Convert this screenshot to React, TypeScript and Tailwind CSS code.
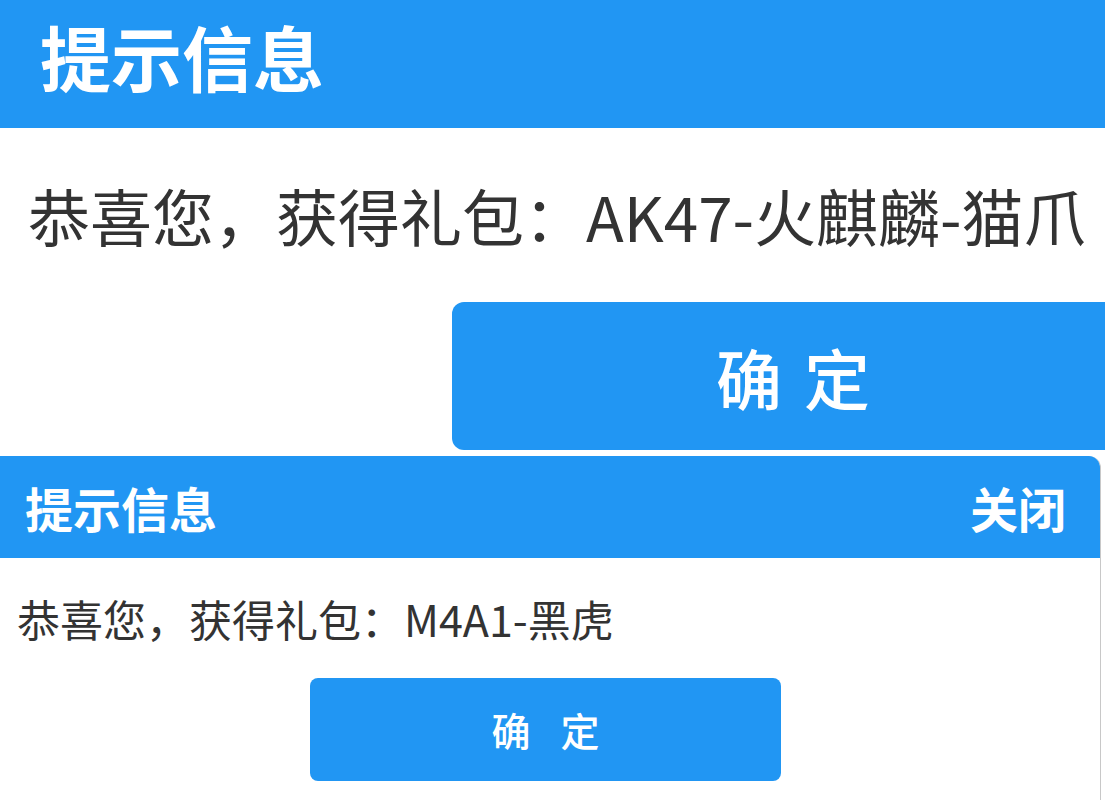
import React from 'react';

const font = { fontFamily: '"Noto Sans CJK SC", "Noto Sans", sans-serif' };

export default function App() {
    return (
        <div className="w-[1105px] h-[800px] bg-white overflow-hidden" style={font}>
            {/* Large dialog (cropped) */}
            <div className="w-full overflow-hidden">
                <div className="h-[128px] bg-[#2196f3] pl-[40px] pt-[20px]">
                    <span className="text-[71px] leading-none font-bold text-white">提示信息</span>
                </div>
                <div className="h-[174px] flex items-center pl-[28px]">
                    <p className="text-[62px] leading-none text-[#333] whitespace-nowrap">恭喜您，获得礼包：AK47-火麒麟-猫爪</p>
                </div>
                <button className="ml-[452px] w-[682px] h-[148px] bg-[#2196f3] rounded-[12px] flex items-center justify-center gap-[22px] text-white text-[66px] leading-none font-medium">
                    <span>确</span>
                    <span>定</span>
                </button>
            </div>

            {/* Small dialog */}
            <div className="mt-[6px] w-[1101px] h-[344px] border-r border-[#c8c8c8] rounded-tr-[12px] overflow-hidden">
                <div className="h-[102px] bg-[#2196f3] flex items-center justify-between pl-[25px] pr-[34px] text-white font-bold text-[48px] leading-none">
                    <span>提示信息</span>
                    <span>关闭</span>
                </div>
                <div className="h-[120px] flex items-center pl-[17px]">
                    <p className="text-[43px] leading-none text-[#333] whitespace-nowrap">恭喜您，获得礼包：M4A1-黑虎</p>
                </div>
                <button className="ml-[310px] w-[471px] h-[103px] bg-[#2196f3] rounded-[8px] flex items-center justify-center gap-[30px] text-white text-[39px] leading-none font-medium">
                    <span>确</span>
                    <span>定</span>
                </button>
            </div>
        </div>
    );
}
